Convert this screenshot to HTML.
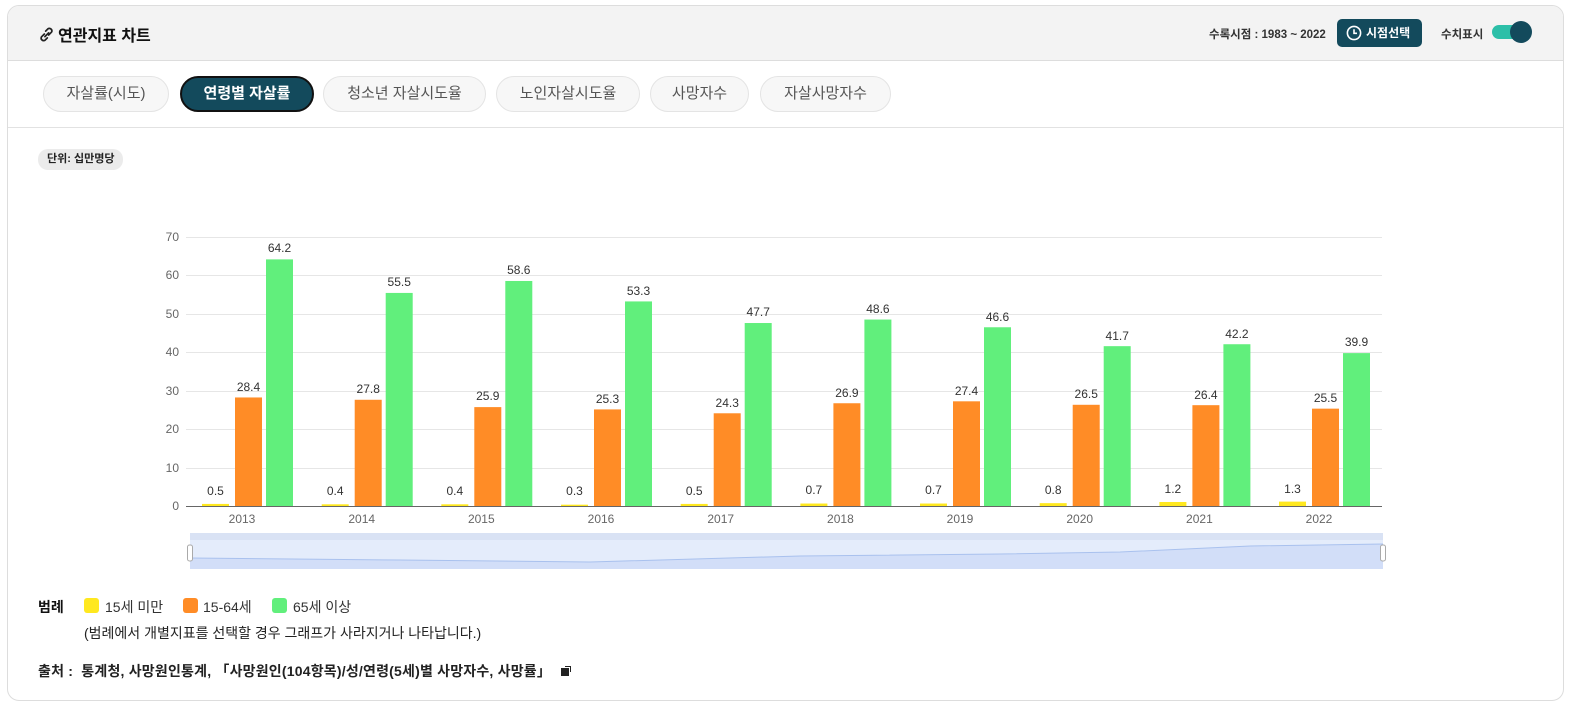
<!DOCTYPE html>
<html><head><meta charset="utf-8">
<style>
*{box-sizing:border-box;margin:0;padding:0}
body{width:1573px;height:707px;background:#fff;font-family:"Liberation Sans","Noto Sans CJK KR",sans-serif;position:relative;overflow:hidden;color:#222}
.card{position:absolute;left:7px;top:5px;width:1557px;height:696px;border:1px solid #ddd;border-radius:12px;overflow:hidden;background:#fff}
.head{position:absolute;left:0;top:0;width:100%;height:55px;background:#f3f3f3;border-bottom:1px solid #ddd}
.title{position:absolute;left:30px;top:16px;font-size:16px;font-weight:bold;color:#111}
.rt{position:absolute;font-size:11.5px;font-weight:bold;color:#333}
.btn{position:absolute;left:1329px;top:13px;width:85px;height:28px;background:#134a5c;border-radius:5px;color:#fff;font-size:12px;font-weight:bold;line-height:28px;padding-left:29px}
.tog{position:absolute;left:1484px;top:19px;width:38px;height:14px;background:#2cbfa8;border-radius:7px}
.tog:after{content:"";position:absolute;right:-2px;top:-4px;width:22px;height:22px;border-radius:50%;background:#134a5c}
.tabs{position:absolute;left:0;top:55px;width:100%;height:67px;border-bottom:1px solid #e2e2e2}
.tab{position:absolute;top:15px;height:36px;border:1px solid #e4e4e4;background:#f7f7f7;border-radius:18px;font-size:15px;color:#555;text-align:center;line-height:34px}
.tab.on{background:#134a5c;color:#fff;font-weight:bold;border:2px solid #111;line-height:32px}
.unit{position:absolute;left:30px;top:143px;height:21px;padding:0 9px;background:#ebebeb;border-radius:10px;font-size:11px;font-weight:bold;line-height:21px}
.lg{position:absolute;font-size:14px;color:#333}
.sq{position:absolute;top:598px;width:15px;height:15px;border-radius:3px}
</style></head><body>
<div class="card">
 <div class="head">
  <div class="title"><svg width="17" height="17" viewBox="0 0 16 16" style="vertical-align:-2px;margin-right:3px"><g fill="none" stroke="#222" stroke-width="1.6" stroke-linecap="round"><path d="M6.5 10 L10 6.5"/><path d="M6 7.5 L3.2 10.3 A2.4 2.4 0 0 0 6.6 13.4 L8.8 11.2"/><path d="M10 8.5 L12.8 5.7 A2.4 2.4 0 0 0 9.4 2.6 L7.2 4.8"/></g></svg>연관지표 차트</div>
  <div class="rt" style="left:1201px;top:20px">수록시점 : 1983 ~ 2022</div>
  <div class="btn"><svg width="16" height="16" viewBox="0 0 16 16" style="position:absolute;left:9px;top:6px"><circle cx="8" cy="8" r="6.6" fill="none" stroke="#fff" stroke-width="1.6"/><path d="M8 4.2V8.3H11" fill="none" stroke="#fff" stroke-width="1.6"/></svg>시점선택</div>
  <div class="rt" style="left:1433px;top:20px">수치표시</div>
  <div class="tog"></div>
 </div>
 <div class="tabs">
  <div class="tab" style="left:35px;width:126px">자살률(시도)</div>
  <div class="tab on" style="left:172px;width:134px">연령별 자살률</div>
  <div class="tab" style="left:315px;width:163px">청소년 자살시도율</div>
  <div class="tab" style="left:488px;width:144px">노인자살시도율</div>
  <div class="tab" style="left:642px;width:99px">사망자수</div>
  <div class="tab" style="left:752px;width:131px">자살사망자수</div>
 </div>
 <div class="unit">단위: 십만명당</div>
</div>
<svg width="1573" height="707" style="position:absolute;left:0;top:0" font-family="Liberation Sans, sans-serif">
 <g stroke="#e6e6e6" stroke-width="1">
  <line x1="186" x2="1382" y1="237.5" y2="237.5"/><line x1="186" x2="1382" y1="275.5" y2="275.5"/><line x1="186" x2="1382" y1="314.5" y2="314.5"/><line x1="186" x2="1382" y1="352.5" y2="352.5"/><line x1="186" x2="1382" y1="391.5" y2="391.5"/><line x1="186" x2="1382" y1="429.5" y2="429.5"/><line x1="186" x2="1382" y1="468.5" y2="468.5"/>
 </g>
 <g font-size="12" fill="#666" text-anchor="end">
  <text x="179" y="241">70</text><text x="179" y="279">60</text><text x="179" y="318">50</text><text x="179" y="356">40</text><text x="179" y="395">30</text><text x="179" y="433">20</text><text x="179" y="472">10</text><text x="179" y="510">0</text>
 </g>
 <g transform="translate(0,507) scale(1,-3.857)">
  <g fill="#ffe81f">
   <rect x="202" width="27" y="0" height="0.8"/><rect x="321.7" width="27" y="0" height="0.7"/><rect x="441.3" width="27" y="0" height="0.7"/><rect x="561" width="27" y="0" height="0.6"/><rect x="680.7" width="27" y="0" height="0.8"/><rect x="800.4" width="27" y="0" height="0.9"/><rect x="920" width="27" y="0" height="0.9"/><rect x="1039.7" width="27" y="0" height="1"/><rect x="1159.4" width="27" y="0" height="1.3"/><rect x="1279" width="27" y="0" height="1.4"/>
  </g>
  <g fill="#ff8c26">
   <rect x="235" width="27" y="0" height="28.4"/><rect x="354.7" width="27" y="0" height="27.8"/><rect x="474.3" width="27" y="0" height="25.9"/><rect x="594" width="27" y="0" height="25.3"/><rect x="713.7" width="27" y="0" height="24.3"/><rect x="833.4" width="27" y="0" height="26.9"/><rect x="953" width="27" y="0" height="27.4"/><rect x="1072.7" width="27" y="0" height="26.5"/><rect x="1192.4" width="27" y="0" height="26.4"/><rect x="1312" width="27" y="0" height="25.5"/>
  </g>
  <g fill="#61ef7c">
   <rect x="266" width="27" y="0" height="64.2"/><rect x="385.7" width="27" y="0" height="55.5"/><rect x="505.3" width="27" y="0" height="58.6"/><rect x="625" width="27" y="0" height="53.3"/><rect x="744.7" width="27" y="0" height="47.7"/><rect x="864.4" width="27" y="0" height="48.6"/><rect x="984" width="27" y="0" height="46.6"/><rect x="1103.7" width="27" y="0" height="41.7"/><rect x="1223.4" width="27" y="0" height="42.2"/><rect x="1343" width="27" y="0" height="39.9"/>
  </g>
 </g>
 <line x1="186" x2="1382" y1="506.5" y2="506.5" stroke="#666"/>
 <g font-size="12" fill="#333" text-anchor="middle">
  <text x="215.5" y="495">0.5</text><text x="335.2" y="495">0.4</text><text x="454.8" y="495">0.4</text><text x="574.5" y="495">0.3</text><text x="694.2" y="495">0.5</text><text x="813.9" y="494">0.7</text><text x="933.5" y="494">0.7</text><text x="1053.2" y="494">0.8</text><text x="1172.9" y="493">1.2</text><text x="1292.5" y="493">1.3</text>
  <text x="248.5" y="391">28.4</text><text x="368.2" y="393">27.8</text><text x="487.8" y="400">25.9</text><text x="607.5" y="403">25.3</text><text x="727.2" y="407">24.3</text><text x="846.9" y="397">26.9</text><text x="966.5" y="395">27.4</text><text x="1086.2" y="398">26.5</text><text x="1205.9" y="399">26.4</text><text x="1325.5" y="402">25.5</text>
  <text x="279.5" y="252">64.2</text><text x="399.2" y="286">55.5</text><text x="518.8" y="274">58.6</text><text x="638.5" y="295">53.3</text><text x="758.2" y="316">47.7</text><text x="877.9" y="313">48.6</text><text x="997.5" y="321">46.6</text><text x="1117.2" y="340">41.7</text><text x="1236.9" y="338">42.2</text><text x="1356.5" y="346">39.9</text>
 </g>
 <g font-size="12" fill="#666" text-anchor="middle">
  <text x="242" y="523">2013</text><text x="361.7" y="523">2014</text><text x="481.3" y="523">2015</text><text x="601" y="523">2016</text><text x="720.7" y="523">2017</text><text x="840.4" y="523">2018</text><text x="960" y="523">2019</text><text x="1079.7" y="523">2020</text><text x="1199.4" y="523">2021</text><text x="1319" y="523">2022</text>
 </g>
 <rect x="190" y="533" width="1193" height="36" fill="#e4ecfb"/>
 <rect x="190" y="533" width="1193" height="7" fill="#d9e2f4"/>
 <path d="M190 558 L400 560 L590 562 L800 556 L1000 554 L1120 552 L1250 546 L1383 544 L1383 569 L190 569Z" fill="#d2def8"/>
 <path d="M190 558 L400 560 L590 562 L800 556 L1000 554 L1120 552 L1250 546 L1383 544" fill="none" stroke="#a9c1ee" stroke-width="1"/>
 <rect x="187.5" y="545" width="5" height="16" rx="2" fill="#fff" stroke="#aaa"/>
 <rect x="1380.5" y="545" width="5" height="16" rx="2" fill="#fff" stroke="#aaa"/>
</svg>
<div class="lg" style="left:38px;top:597px;font-weight:bold;color:#111">범례</div>
<div class="sq" style="left:84px;background:#ffe81f"></div><div class="lg" style="left:105px;top:597px">15세 미만</div>
<div class="sq" style="left:183px;background:#ff8c26"></div><div class="lg" style="left:203px;top:597px">15-64세</div>
<div class="sq" style="left:272px;background:#61ef7c"></div><div class="lg" style="left:293px;top:597px">65세 이상</div>
<div class="lg" style="left:84px;top:623px;color:#222">(범례에서 개별지표를 선택할 경우 그래프가 사라지거나 나타납니다.)</div>
<div class="lg" style="left:38px;top:661px;font-weight:bold;color:#222;font-size:14px;letter-spacing:0.2px">출처 :&nbsp; 통계청, 사망원인통계, 「사망원인(104항목)/성/연령(5세)별 사망자수, 사망률」 <span style="display:inline-block;width:8px;height:8px;background:#222;margin-left:6px;box-shadow:2px -2px 0 -1px #fff,3px -3px 0 -1px #222"></span></div>
</body></html>
